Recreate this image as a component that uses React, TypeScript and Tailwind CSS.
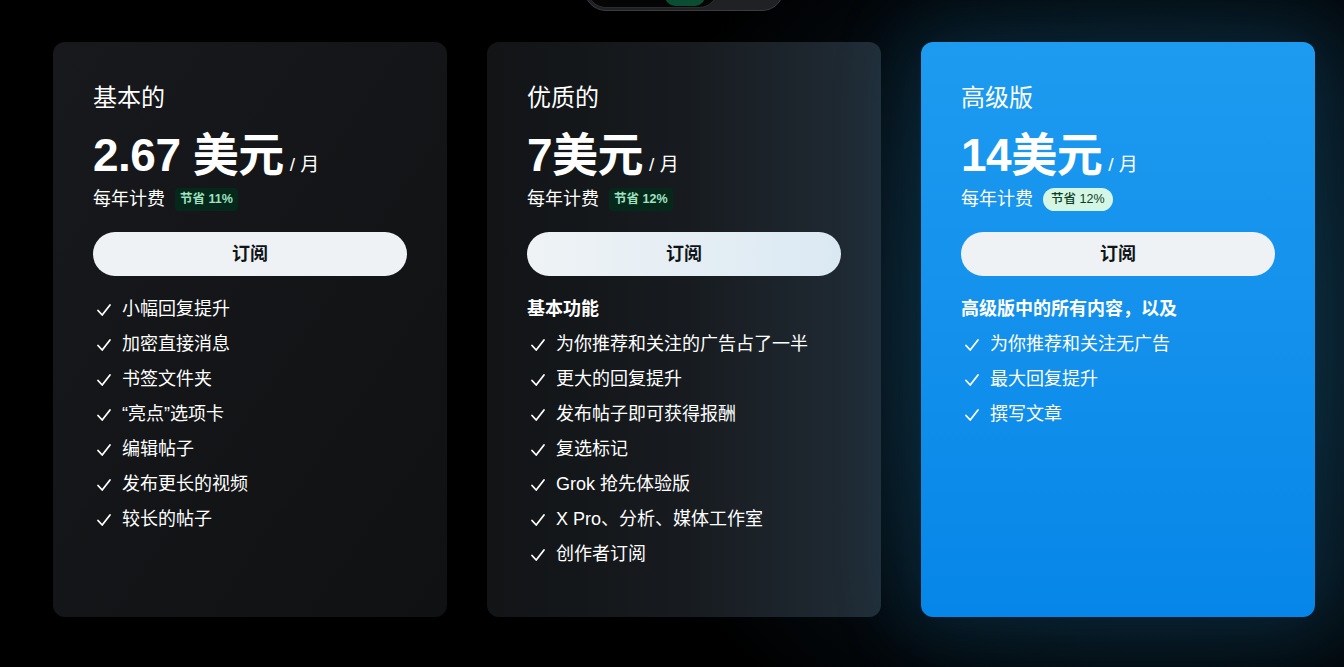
type Plan = {
  name: string;
  price: string;
  save: string;
  heading?: string;
  features: string[];
  variant: "basic" | "premium" | "plus";
};

const plans: Plan[] = [
  {
    name: "基本的",
    price: "2.67 美元",
    save: "节省 11%",
    variant: "basic",
    features: ["小幅回复提升", "加密直接消息", "书签文件夹", "“亮点”选项卡", "编辑帖子", "发布更长的视频", "较长的帖子"],
  },
  {
    name: "优质的",
    price: "7美元",
    save: "节省 12%",
    variant: "premium",
    heading: "基本功能",
    features: [
      "为你推荐和关注的广告占了一半",
      "更大的回复提升",
      "发布帖子即可获得报酬",
      "复选标记",
      "Grok 抢先体验版",
      "X Pro、分析、媒体工作室",
      "创作者订阅",
    ],
  },
  {
    name: "高级版",
    price: "14美元",
    save: "节省 12%",
    variant: "plus",
    heading: "高级版中的所有内容，以及",
    features: ["为你推荐和关注无广告", "最大回复提升", "撰写文章"],
  },
];

function CheckMark() {
  return (
    <svg width="16" height="16" viewBox="0 0 16 16" className="ml-[3px] mr-[10px] shrink-0" fill="none">
      <path d="M2 8.5 L6.2 13 L14 3" stroke="currentColor" strokeWidth="1.8" strokeLinecap="round" strokeLinejoin="round" />
    </svg>
  );
}

function PlanCard({ plan }: { plan: Plan }) {
  const card =
    plan.variant === "basic"
      ? "bg-gradient-to-br from-[#17191c] to-[#101113]"
      : plan.variant === "premium"
        ? "bg-gradient-to-r from-[#121416] via-[#171b1f] to-[#212d37]"
        : "bg-gradient-to-b from-[#1d9bf0] to-[#0686e8] shadow-[0_0_70px_18px_rgba(20,120,170,0.22)]";
  const badge =
    plan.variant === "plus"
      ? "bg-[#d6f6e5] text-[#0b3d24] rounded-full px-2 font-medium"
      : "bg-[#05281b] text-[#9fe3c0] rounded-sm px-[5px] font-bold";
  const button =
    plan.variant === "premium"
      ? "bg-gradient-to-r from-[#eff3f5] to-[#dbe9f3]"
      : "bg-[#eef2f4]";

  return (
    <div className={`w-[394px] h-[575px] rounded-[12px] px-10 pt-10 text-white ${card}`}>
      <div className="text-[24px] leading-8">{plan.name}</div>
      <div className="mt-[15px] flex items-baseline h-[52px]">
        <span className="text-[46px] leading-[52px] font-bold tracking-[-0.5px]">{plan.price}</span>
        <span className="ml-[6px] text-[19px]">/ 月</span>
      </div>
      <div className="mt-[4px] h-[28px] flex items-center gap-[10px]">
        <span className="text-[18px]">每年计费</span>
        <span className={`text-[12.5px] leading-[23px] ${badge}`}>{plan.save}</span>
      </div>
      <button
        className={`mt-[19px] w-full h-[44px] rounded-full text-[#0f1419] text-[18px] font-bold ${button}`}
      >
        订阅
      </button>
      <ul className="mt-4">
        {plan.heading && <li className="h-[35px] flex items-center text-[18px] font-bold">{plan.heading}</li>}
        {plan.features.map((f) => (
          <li key={f} className="h-[35px] flex items-center text-[18px]">
            <CheckMark />
            {f}
          </li>
        ))}
      </ul>
    </div>
  );
}

export default function App() {
  return (
    <div
      className="min-h-[667px] w-full overflow-hidden pl-6 bg-black bg-[radial-gradient(ellipse_700px_600px_at_1150px_330px,#0d2430_0%,#07121a_45%,#000000_80%)]"
      style={{ fontFamily: '"Liberation Sans", "Noto Sans CJK SC", sans-serif' }}
    >
      <div className="flex justify-center -mt-[33px]">
        <div className="w-[200px] h-[44px] rounded-full bg-[#1f2124] border border-[#3a3d40] flex items-stretch p-[2px]">
          <div className="w-[131px] rounded-full bg-[#050505] border border-[#2a2c2e] flex items-center justify-end pr-3">
            <span className="w-[40px] h-[20px] rounded-full bg-[#0a4d33] mt-[14px]" />
          </div>
        </div>
      </div>
      <div className="mt-[31px] flex justify-center gap-10 pb-10">
        {plans.map((p) => (
          <PlanCard key={p.name} plan={p} />
        ))}
      </div>
    </div>
  );
}
